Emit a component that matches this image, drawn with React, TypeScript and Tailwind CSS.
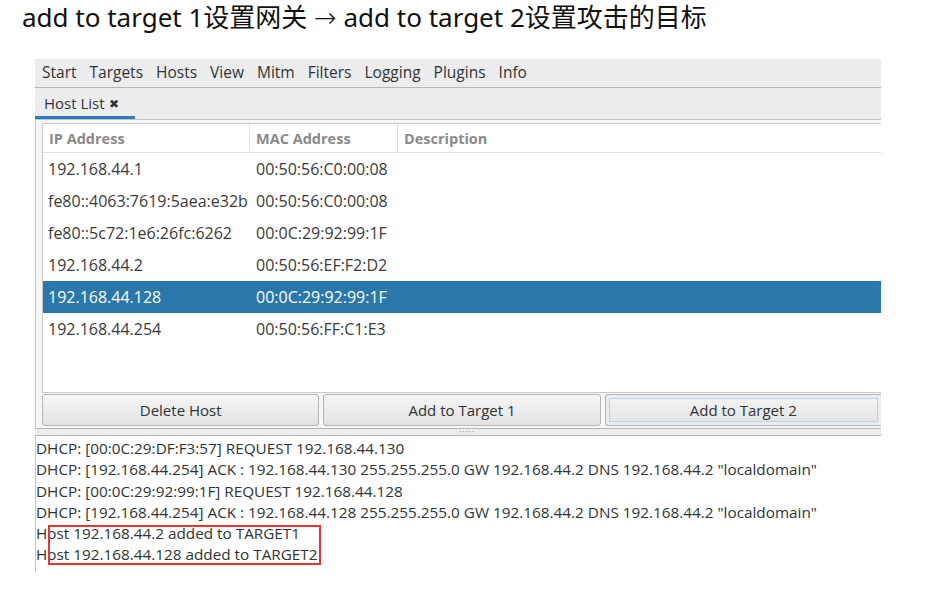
import React from "react";

const rows = [
  ["192.168.44.1", "00:50:56:C0:00:08"],
  ["fe80::4063:7619:5aea:e32b", "00:50:56:C0:00:08"],
  ["fe80::5c72:1e6:26fc:6262", "00:0C:29:92:99:1F"],
  ["192.168.44.2", "00:50:56:EF:F2:D2"],
  ["192.168.44.128", "00:0C:29:92:99:1F"],
  ["192.168.44.254", "00:50:56:FF:C1:E3"],
];

const logs = [
  "DHCP: [00:0C:29:DF:F3:57] REQUEST 192.168.44.130",
  'DHCP: [192.168.44.254] ACK : 192.168.44.130 255.255.255.0 GW 192.168.44.2 DNS 192.168.44.2 "localdomain"',
  "DHCP: [00:0C:29:92:99:1F] REQUEST 192.168.44.128",
  'DHCP: [192.168.44.254] ACK : 192.168.44.128 255.255.255.0 GW 192.168.44.2 DNS 192.168.44.2 "localdomain"',
  "Host 192.168.44.2 added to TARGET1",
  "Host 192.168.44.128 added to TARGET2",
];

const menus = ["Start", "Targets", "Hosts", "View", "Mitm", "Filters", "Logging", "Plugins", "Info"];

export default function App() {
  const ui = { fontFamily: '"Open Sans", "Noto Sans", sans-serif' };
  return (
    <div className="relative w-[937px] h-[595px] bg-white overflow-hidden">
      <div className="h-[59px] pt-[1px]">
        <div
          className="pl-[22px] text-[26px] leading-[32px] text-[#111] whitespace-nowrap"
          style={{ fontFamily: '"Noto Sans", "Noto Sans CJK SC", sans-serif' }}
        >
          add to target 1设置网关 <span style={{ fontFamily: '"DejaVu Sans", sans-serif' }} className="text-[27px] font-light">→</span> add to target 2设置攻击的目标
        </div>
      </div>
      <div className="ml-[35px] w-[846px] text-[#2e3436]" style={ui}>
        {/* menubar */}
        <div className="h-[29px] bg-[#ededed] border-b border-[#b8b8b8] flex items-center pl-[7px] gap-[13px] text-[15.5px]">
          {menus.map((m) => (
            <span key={m}>{m}</span>
          ))}
        </div>
        {/* tab bar */}
        <div className="h-[32px] bg-[#ededed] flex items-stretch border-b border-[#c4c4c4]">
          <div className="w-[100px] flex items-center pl-[9px] pt-[3px] text-[15px] border-b-[3px] border-[#2b7bc2]">
            <span>Host List</span>
            <span className="ml-[4px] text-[12px]">✖</span>
          </div>
        </div>
        {/* notebook page */}
        <div className="bg-[#f6f6f6] border-l border-[#c4c4c4] pl-[6px] pt-[3px] pb-[2px]">
          <div className="bg-white border border-[#c8c8c8] h-[270px] border-r-0">
            <div className="h-[29px] flex text-[14.5px] font-bold text-[#8a8a8a] border-b border-[#e2e2e2]">
              <div className="w-[207px] pl-[6px] pt-[1px] flex items-center border-r border-[#e2e2e2]">IP Address</div>
              <div className="w-[148px] pl-[6px] pt-[1px] flex items-center border-r border-[#e2e2e2]">MAC Address</div>
              <div className="flex-1 pl-[6px] pt-[1px] flex items-center">Description</div>
            </div>
            {rows.map(([ip, mac]) => {
              const sel = ip === "192.168.44.128";
              return (
                <div
                  key={ip}
                  className={`h-[32px] flex items-center text-[16px] ${sel ? "bg-[#2a77ab] text-white" : "text-[#3a3a3a]"}`}
                >
                  <div className="w-[207px] pl-[5px] whitespace-nowrap">{ip}</div>
                  <div className="w-[148px] pl-[6px] whitespace-nowrap">{mac}</div>
                </div>
              );
            })}
          </div>
          <div className="flex gap-[4px] mt-[1px] h-[32px] text-[15px]">
            {["Delete Host", "Add to Target 1", "Add to Target 2"].map((b, i) => (
              <div
                key={b}
                className={`flex-1 flex items-center justify-center rounded-[3px] border border-[#b4b4b4] bg-gradient-to-b from-[#f6f6f6] to-[#e2e2e2] ${i === 2 ? "rounded-r-none border-r-0 shadow-[inset_0_0_0_3px_#ececec,inset_0_0_0_4px_#bcd2e6]" : ""}`}
              >
                {b}
              </div>
            ))}
          </div>
        </div>
        {/* pane separator */}
        <div className="h-[8px] bg-[#ededed] border-t border-b border-[#b4b4b4] flex justify-start pl-[424px] items-center">
          <span className="text-[6px] leading-none tracking-[1px] text-[#aaa]">•••••</span>
        </div>
        {/* log */}
        <div className="bg-white border-l border-[#c4c4c4] h-[136px] pt-[2px] text-[15.3px] leading-[21.3px] text-[#2e3436]">
          {logs.map((l) => (
            <div key={l} className="whitespace-nowrap">{l}</div>
          ))}
        </div>
      </div>
      <div className="absolute left-[48px] top-[525px] w-[273px] h-[40px] border-2 border-[#ea3333]" />
    </div>
  );
}
